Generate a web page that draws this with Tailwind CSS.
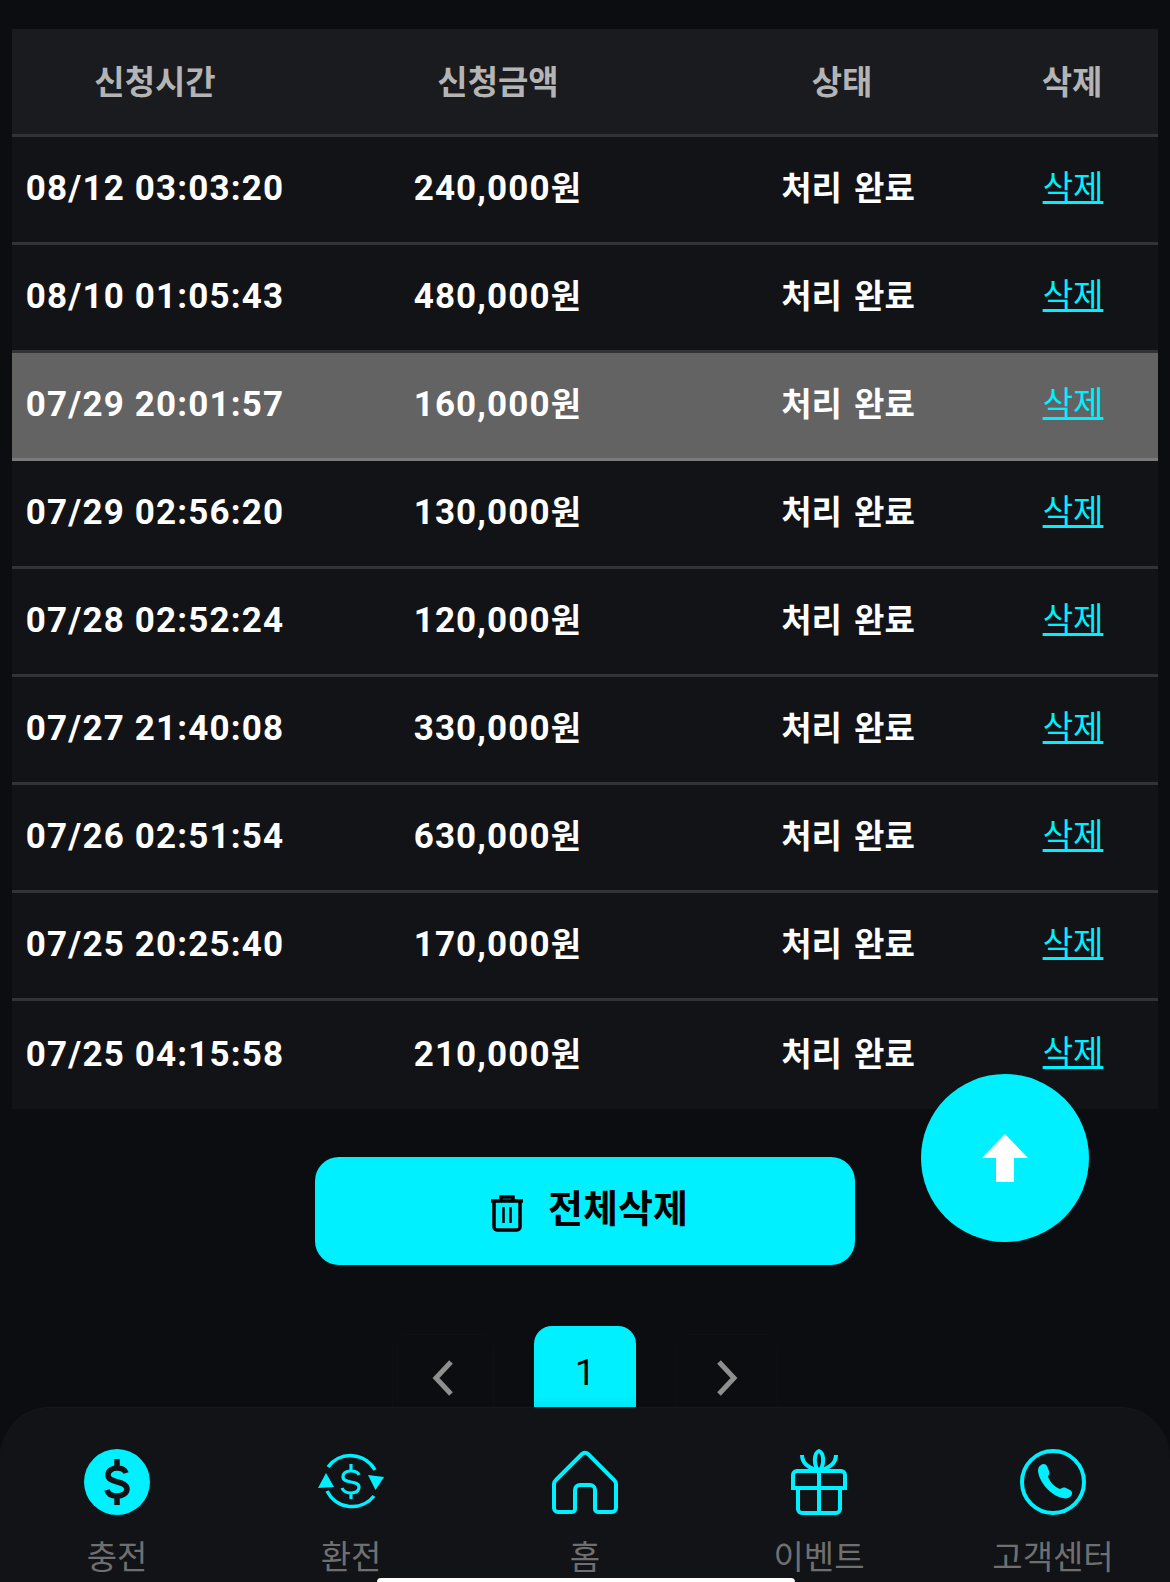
<!DOCTYPE html>
<html lang="ko">
<head>
  <meta charset="UTF-8" />
  <meta name="viewport" content="width=device-width, initial-scale=1" />
  <title>환전 내역</title>
  <script src="https://cdn.jsdelivr.net/npm/@tailwindcss/browser@4"></script>
</head>
<body class="bg-[#0c0d10] text-white font-['Roboto','Noto_Sans_CJK_KR',sans-serif]">
<div class="relative w-[1170px] h-[1582px] overflow-hidden">

  <!-- Table -->
  <div class="pt-[29px] px-3">
    <div class="bg-[#111316]">
      <div class="grid grid-cols-[286px_400px_294px_166px] h-[108px] items-center text-center bg-[#1a1b1e] border-b-[3px] border-[#323335] text-[33px] font-bold text-[#b4b4b4] pt-[2px]">
        <div>신청시간</div><div>신청금액</div><div class="-translate-x-[3px]">상태</div><div class="-translate-x-[3px]">삭제</div>
      </div>

      <div class="grid grid-cols-[286px_400px_294px_166px] h-[108px] items-center text-center border-b-[3px] border-[#323335] text-[33px] font-bold pb-[1px]">
        <div class="text-[35px] tracking-[1.15px]">08/12 03:03:20</div><div class="text-[35px] tracking-[1.15px]">240,000<span class="text-[33px]">원</span></div><div class="translate-x-[3px] [word-spacing:4px]">처리 완료</div><a class="font-normal text-[#00f0ff] underline -translate-x-[2px] -translate-y-[1px]">삭제</a>
      </div>
      <div class="grid grid-cols-[286px_400px_294px_166px] h-[108px] items-center text-center border-b-[3px] border-[#323335] text-[33px] font-bold pb-[1px]">
        <div class="text-[35px] tracking-[1.15px]">08/10 01:05:43</div><div class="text-[35px] tracking-[1.15px]">480,000<span class="text-[33px]">원</span></div><div class="translate-x-[3px] [word-spacing:4px]">처리 완료</div><a class="font-normal text-[#00f0ff] underline -translate-x-[2px] -translate-y-[1px]">삭제</a>
      </div>
      <div class="grid grid-cols-[286px_400px_294px_166px] h-[108px] items-center text-center bg-[#636363] border-b-[3px] border-[#7a7a7a] text-[33px] font-bold pb-[1px]">
        <div class="text-[35px] tracking-[1.15px]">07/29 20:01:57</div><div class="text-[35px] tracking-[1.15px]">160,000<span class="text-[33px]">원</span></div><div class="translate-x-[3px] [word-spacing:4px]">처리 완료</div><a class="font-normal text-[#00f0ff] underline -translate-x-[2px] -translate-y-[1px]">삭제</a>
      </div>
      <div class="grid grid-cols-[286px_400px_294px_166px] h-[108px] items-center text-center border-b-[3px] border-[#323335] text-[33px] font-bold pb-[1px]">
        <div class="text-[35px] tracking-[1.15px]">07/29 02:56:20</div><div class="text-[35px] tracking-[1.15px]">130,000<span class="text-[33px]">원</span></div><div class="translate-x-[3px] [word-spacing:4px]">처리 완료</div><a class="font-normal text-[#00f0ff] underline -translate-x-[2px] -translate-y-[1px]">삭제</a>
      </div>
      <div class="grid grid-cols-[286px_400px_294px_166px] h-[108px] items-center text-center border-b-[3px] border-[#323335] text-[33px] font-bold pb-[1px]">
        <div class="text-[35px] tracking-[1.15px]">07/28 02:52:24</div><div class="text-[35px] tracking-[1.15px]">120,000<span class="text-[33px]">원</span></div><div class="translate-x-[3px] [word-spacing:4px]">처리 완료</div><a class="font-normal text-[#00f0ff] underline -translate-x-[2px] -translate-y-[1px]">삭제</a>
      </div>
      <div class="grid grid-cols-[286px_400px_294px_166px] h-[108px] items-center text-center border-b-[3px] border-[#323335] text-[33px] font-bold pb-[1px]">
        <div class="text-[35px] tracking-[1.15px]">07/27 21:40:08</div><div class="text-[35px] tracking-[1.15px]">330,000<span class="text-[33px]">원</span></div><div class="translate-x-[3px] [word-spacing:4px]">처리 완료</div><a class="font-normal text-[#00f0ff] underline -translate-x-[2px] -translate-y-[1px]">삭제</a>
      </div>
      <div class="grid grid-cols-[286px_400px_294px_166px] h-[108px] items-center text-center border-b-[3px] border-[#323335] text-[33px] font-bold pb-[1px]">
        <div class="text-[35px] tracking-[1.15px]">07/26 02:51:54</div><div class="text-[35px] tracking-[1.15px]">630,000<span class="text-[33px]">원</span></div><div class="translate-x-[3px] [word-spacing:4px]">처리 완료</div><a class="font-normal text-[#00f0ff] underline -translate-x-[2px] -translate-y-[1px]">삭제</a>
      </div>
      <div class="grid grid-cols-[286px_400px_294px_166px] h-[108px] items-center text-center border-b-[3px] border-[#323335] text-[33px] font-bold pb-[1px]">
        <div class="text-[35px] tracking-[1.15px]">07/25 20:25:40</div><div class="text-[35px] tracking-[1.15px]">170,000<span class="text-[33px]">원</span></div><div class="translate-x-[3px] [word-spacing:4px]">처리 완료</div><a class="font-normal text-[#00f0ff] underline -translate-x-[2px] -translate-y-[1px]">삭제</a>
      </div>
      <div class="grid grid-cols-[286px_400px_294px_166px] h-[108px] items-center text-center text-[33px] font-bold">
        <div class="text-[35px] tracking-[1.15px]">07/25 04:15:58</div><div class="text-[35px] tracking-[1.15px]">210,000<span class="text-[33px]">원</span></div><div class="translate-x-[3px] [word-spacing:4px]">처리 완료</div><a class="font-normal text-[#00f0ff] underline -translate-x-[2px] -translate-y-[2px]">삭제</a>
      </div>
    </div>

    <!-- Delete all -->
    <div class="flex justify-center mt-[48px]">
      <button class="w-[540px] h-[108px] rounded-[24px] bg-[#00f0ff] text-black flex items-center justify-center gap-[24px] text-[38px] font-bold pb-[3px] pl-[8px]">
        <svg class="w-[34px] h-[38px] mt-[6px]" viewBox="0 0 34 38" fill="none" stroke="#000" stroke-width="3.5">
          <path d="M1 7h32M11 7V3h12v4M4 7v26a3 3 0 0 0 3 3h20a3 3 0 0 0 3-3V7" />
          <path d="M13.5 13v16M20.5 13v16" stroke-width="2.5" />
        </svg>
        <span>전체삭제</span>
      </button>
    </div>

    <!-- Pagination -->
    <div class="flex justify-center items-start gap-[40px] mt-[61px]">
      <div class="w-[102px] h-[100px] border border-[#0f1013] rounded-[12px] flex items-center justify-center mt-[8px] pb-[12px]">
        <svg class="w-[22px] h-[36px]" viewBox="0 0 22 36" fill="none" stroke="#8f8f8f" stroke-width="5"><path d="M19 2 4 18l15 16" /></svg>
      </div>
      <div class="w-[102px] h-[100px] rounded-t-[18px] bg-gradient-to-b from-[#00f0ff] from-70% to-[#00d8e4] text-black text-[36px] flex justify-center pt-[20px]">1</div>
      <div class="w-[102px] h-[100px] border border-[#0f1013] rounded-[12px] flex items-center justify-center mt-[8px] pb-[12px]">
        <svg class="w-[22px] h-[36px]" viewBox="0 0 22 36" fill="none" stroke="#8f8f8f" stroke-width="5"><path d="m3 2 15 16L3 34" /></svg>
      </div>
    </div>
  </div>

  <!-- Scroll to top -->
  <button class="absolute left-[921px] top-[1074px] w-[168px] h-[168px] rounded-full bg-[#00f0ff] flex items-center justify-center">
    <svg class="w-[46px] h-[48px]" viewBox="0 0 46 48" fill="#fff"><path d="M23 0 46 24H32V48H14V24H0Z" /></svg>
  </button>

  <!-- Bottom nav -->
  <nav class="absolute left-0 right-0 bottom-0 h-[175px] rounded-t-[50px] bg-[#111316] border-t border-[#17191c] grid grid-cols-5 text-[33px] text-[#6f6f70]">
    <a class="flex flex-col items-center pt-[41px]">
      <svg class="w-[66px] h-[66px]" viewBox="0 0 66 66">
        <circle cx="33" cy="33" r="33" fill="#00f0ff" />
        <path d="M42 24c-1-3-4-5-9-5-5 0-9 3-9 7 0 9 19 5 19 14 0 4-4 7-10 7-5 0-9-2-10-6M33 10v9M33 47v9" fill="none" stroke="#111316" stroke-width="5.5" />
      </svg>
      <span class="mt-[21px] leading-[44px]">충전</span>
    </a>
    <a class="flex flex-col items-center pt-[41px]">
      <svg class="w-[66px] h-[66px]" viewBox="0 0 66 66" fill="none" stroke="#00f0ff" stroke-width="3.5">
        <path d="M10 18A28 28 0 0 1 57 21" />
        <path d="M9 42A28 28 0 0 0 56 47" />
        <path d="M50 26 66 28 57.5 41Z" fill="#00f0ff" stroke="none" />
        <path d="M0 39 16 38 8 24Z" fill="#00f0ff" stroke="none" />
        <path d="M41 26c-1-3-4-4-8-4-5 0-8 2-8 6 0 7 16 3 16 10 0 4-3 6-8 6-4 0-8-2-9-5M33 15v7M33 44v6" stroke-width="3.2" />
      </svg>
      <span class="mt-[21px] leading-[44px]">환전</span>
    </a>
    <a class="flex flex-col items-center pt-[41px]">
      <svg class="w-[66px] h-[66px]" viewBox="0 0 66 66" fill="none" stroke="#00f0ff" stroke-width="4">
        <path d="M30 5 4 31a6 6 0 0 0-2 5v23a4 4 0 0 0 4 4h14a3 3 0 0 0 3-3V41a5 5 0 0 1 5-5h10a5 5 0 0 1 5 5v19a3 3 0 0 0 3 3h14a4 4 0 0 0 4-4V36a6 6 0 0 0-2-5L36 5a4 4 0 0 0-6 0Z" />
      </svg>
      <span class="mt-[21px] leading-[44px]">홈</span>
    </a>
    <a class="flex flex-col items-center pt-[41px]">
      <svg class="w-[56px] h-[66px]" viewBox="0 0 56 66" fill="none" stroke="#00f0ff" stroke-width="4">
        <path d="M6 22h44a4 4 0 0 1 4 4v13H2V26a4 4 0 0 1 4-4Z" />
        <path d="M7 39v21a4 4 0 0 0 4 4h34a4 4 0 0 0 4-4V39M28 22v42" />
        <path d="M28 22c-6-6-5-18 0-20 5 2 6 14 0 20Z" />
        <path d="M11 6c0 8 6 13 17 16 11-3 17-8 17-16" />
      </svg>
      <span class="mt-[21px] leading-[44px]">이벤트</span>
    </a>
    <a class="flex flex-col items-center pt-[41px]">
      <svg class="w-[66px] h-[66px]" viewBox="0 0 66 66" fill="none">
        <circle cx="33" cy="33" r="31" stroke="#00f0ff" stroke-width="4" />
        <path d="M21 16c2-2 5-1 6 1l2 5c1 2 0 4-1 5 1 5 6 11 12 13 2-1 4-2 6-1l4 2c2 1 3 4 1 6-2 2-5 3-8 2-12-2-24-16-25-27 0-3 1-5 3-6Z" fill="#00f0ff" />
      </svg>
      <span class="mt-[21px] leading-[44px]">고객센터</span>
    </a>
  </nav>

  <!-- Home indicator -->
  <div class="absolute left-[377px] bottom-0 w-[418px] h-[4px] rounded-t-[4px] bg-white"></div>
</div>
</body>
</html>
